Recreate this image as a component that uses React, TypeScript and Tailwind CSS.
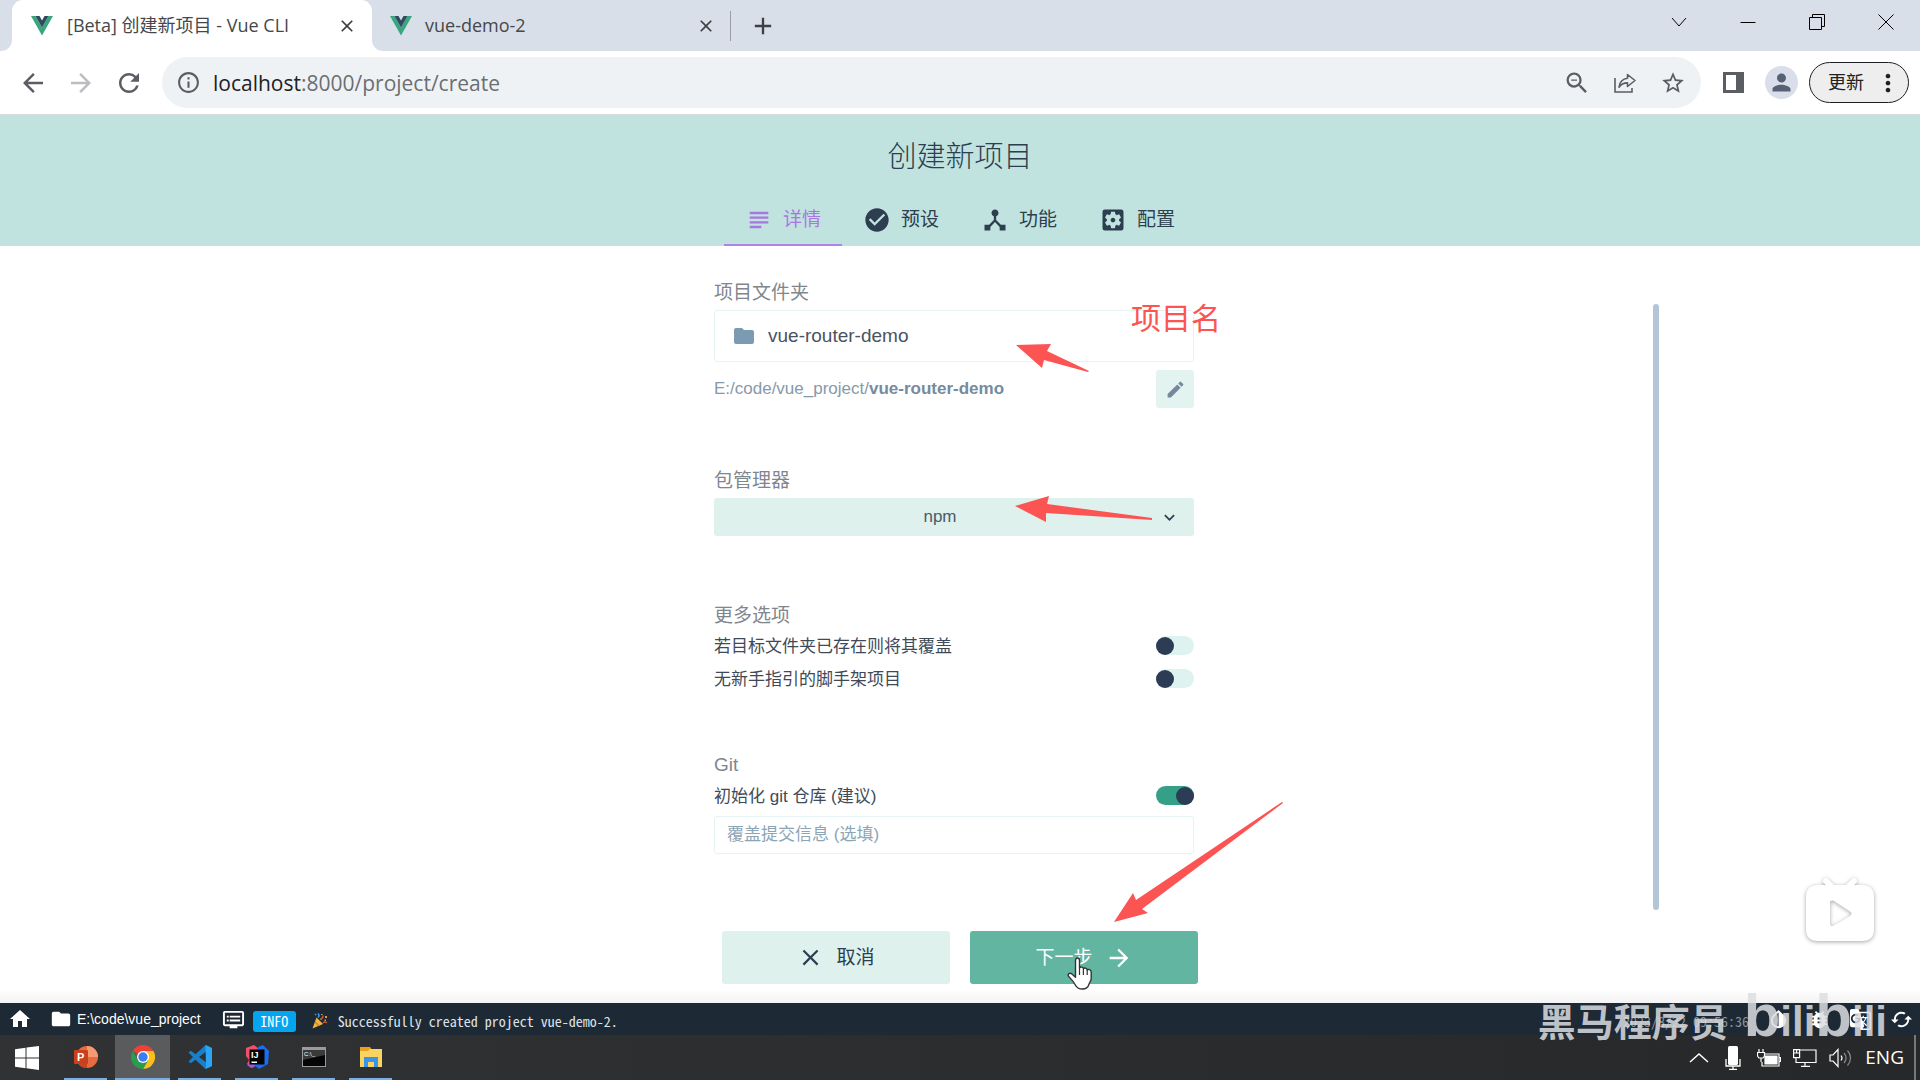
import React, { useState } from 'react';
import {
  MdAdd, MdArrowBack, MdArrowForward, MdBugReport, MdCached, MdCheckCircle, MdClose, MdDeviceHub, MdDvr, MdEdit,
  MdFolder, MdGTranslate, MdHome, MdInfoOutline, MdInvertColors, MdKeyboardArrowDown, MdMoreVert, MdPerson,
  MdRefresh, MdSettingsApplications, MdStarBorder, MdSubject, MdZoomOut,
} from 'react-icons/md';

const steps = [
  { label: '详情', Icon: MdSubject },
  { label: '预设', Icon: MdCheckCircle },
  { label: '功能', Icon: MdDeviceHub },
  { label: '配置', Icon: MdSettingsApplications },
];

const VueLogo = () => (
  <svg viewBox="0 0 22 20" className="w-[22px] h-5 shrink-0">
    <path fill="#3aa57f" d="M0 0h4.5L11 11.5 17.5 0H22L11 19.5z" />
    <path fill="#2f4a5e" d="M4.5 0h4L11 4.4 13.5 0h4L11 11.5z" />
  </svg>
);

const ShareIcon = () => (
  <svg viewBox="0 0 24 24" className="w-6 h-6" fill="none" stroke="currentColor" strokeWidth="1.6">
    <path d="M2 7v14h17v-4" />
    <path strokeLinejoin="round" d="M14.5 3.5 22 9.5l-7.500 6v-3.600c-4 0-6.500 1.200-8.500 4.300.6-4.800 3.300-8.400 8.500-9z" />
  </svg>
);

/* Barra de pestañas */
function TabStrip() {
  return (
    <div className="h-[51px] bg-[#d9dfe8] flex items-end">
      <div className="w-3 h-[51px] bg-white">
        <div className="h-full rounded-br-[11px] bg-[#d9dfe8]" />
      </div>
      <div className="w-[360px] h-[51px] bg-white rounded-t-[11px] flex items-center pl-[19px] pr-[15px]">
        <VueLogo />
        <span className="ml-[14px] flex-1 text-[18px] text-[#45474a] whitespace-nowrap">[Beta] 创建新项目 - Vue CLI</span>
        <button aria-label="关闭标签页"><MdClose size={20} className="text-[#3c4043]" /></button>
      </div>
      <div className="w-[358px] h-[51px] bg-white">
        <div className="h-full rounded-bl-[11px] bg-[#d9dfe8] flex items-center pl-[18px] pr-[14px]">
          <VueLogo />
          <span className="ml-[13px] flex-1 text-[18px] text-[#45474a]">vue-demo-2</span>
          <button aria-label="关闭标签页"><MdClose size={20} className="text-[#3c4043]" /></button>
        </div>
      </div>
      <div className="h-[51px] flex items-center">
        <span className="w-px h-[30px] bg-[#9a9da3]" />
        <button aria-label="新标签页" className="ml-[18px]"><MdAdd size={28} className="text-[#3c4043]" /></button>
      </div>
      <div className="ml-auto h-[51px] pb-2 flex items-center text-black">
        <button aria-label="搜索标签页" className="w-[69px] flex justify-center">
          <svg viewBox="0 0 16 16" className="w-4 h-4" fill="none" stroke="currentColor"><path d="m1 4 7 8 7-8" /></svg>
        </button>
        <button aria-label="最小化" className="w-[69px] flex justify-center">
          <svg viewBox="0 0 16 16" className="w-4 h-4" fill="none" stroke="currentColor"><path d="M.5 8.500h15" /></svg>
        </button>
        <button aria-label="还原" className="w-[69px] flex justify-center">
          <svg viewBox="0 0 16 16" className="w-4 h-4" fill="none" stroke="currentColor"><path d="M.5 3.500h12v12H.5zM3.500 3.500v-3h12v12h-3" /></svg>
        </button>
        <button aria-label="关闭" className="w-[69px] flex justify-center">
          <svg viewBox="0 0 16 16" className="w-4 h-4" fill="none" stroke="currentColor"><path d="m.5.5 15 15m0-15-15 15" /></svg>
        </button>
      </div>
    </div>
  );
}

function Toolbar() {
  return (
    <div className="h-16 bg-white border-b border-[#dcd9da] flex items-center pl-[18px] pr-[11px] text-[#5a5d62]">
      <button aria-label="后退"><MdArrowBack size={30} /></button>
      <button aria-label="前进" className="ml-[18px]"><MdArrowForward size={30} className="text-[#bcbdc0]" /></button>
      <button aria-label="刷新" className="ml-[18px]"><MdRefresh size={30} /></button>
      <div className="ml-[18px] flex-1 h-[51px] rounded-full bg-[#eff2f4] flex items-center pl-[14px] pr-[14px]">
        <MdInfoOutline size={25} />
        <span className="ml-3 flex-1 text-[21px] leading-[30px] text-[#6b6e72]"><span className="text-[#202124]">localhost</span>:8000/project/create</span>
        <div className="flex items-center gap-5">
          <button aria-label="缩放" className="w-7 flex justify-center"><MdZoomOut size={28} /></button>
          <button aria-label="分享" className="w-7 flex justify-center"><ShareIcon /></button>
          <button aria-label="收藏" className="w-7 flex justify-center"><MdStarBorder size={26} /></button>
        </div>
      </div>
      <button aria-label="侧边栏" className="ml-[22px]">
        <svg viewBox="0 0 21 21" className="w-[21px] h-[21px]"><path fill="currentColor" fillRule="evenodd" d="M0 0h21v21H0zM3 3v15h10V3z" /></svg>
      </button>
      <button aria-label="用户" className="ml-[21px] w-[33px] h-[33px] rounded-full bg-[#d9deea] flex items-center justify-center">
        <MdPerson size={27} className="text-[#566176]" />
      </button>
      <button className="ml-[11px] w-[100px] h-[41px] rounded-full border border-[#1f1f1f] bg-[#eeeeee] flex items-center pl-[18px] text-[18px] text-[#202124]">
        更新<MdMoreVert size={28} className="ml-[10px]" />
      </button>
    </div>
  );
}

function Toggle({ label, initial }: { label: string; initial: boolean }) {
  const [on, setOn] = useState(initial);
  return (
    <label className="h-[33px] flex items-center justify-between text-[17px] text-[#3f4a58]">
      <span className="pt-[2px]">{label}</span>
      <input
        type="checkbox"
        checked={on}
        onChange={() => setOn(!on)}
        className="appearance-none w-[38px] h-[19px] rounded-full bg-[#def2ef] checked:bg-[#34a088] flex items-center checked:justify-end before:w-[18px] before:h-[18px] before:rounded-full before:bg-[#2b3c54]"
      />
    </label>
  );
}

/* Flechas rojas sobre el formulario */
const Marks = () => (
  <div className="absolute left-0 top-0 pointer-events-none">
    <svg viewBox="0 0 600 700" className="w-[600px] h-[700px]" fill="#fc5353">
      <path d="m302 99 35-1-4 7 42 20-1 1-44-12-2 8z" />
      <path d="m301 260 34-10-2 8 105 14v2l-106-7v9z" />
      <path d="m400 676 19-29 3 7 146-98 1 1-141 106 6 4z" />
    </svg>
    <span className="absolute left-[417px] top-[55px] text-[30px] leading-9 text-[#fc5353] whitespace-nowrap">项目名</span>
  </div>
);

const Hand = () => (
  <svg viewBox="0 0 26 33" className="absolute left-[97px] top-[26px] w-[26px] h-[33px] pointer-events-none">
    <path
      fill="#fff" stroke="#333" strokeWidth="1.400" strokeLinejoin="round"
      d="M8.500 3.500c0-3.300 4-3.300 4 0V11c.8-1.500 3.700-1.200 3.900.8.9-1.300 3.600-.8 3.800 1.200 1.200-1.200 4-.5 4 2v6.500c0 2.500-1.800 4.200-2.400 6.200-.8 2.600-2.500 4.300-6.300 4.300-4 0-6-1.500-7.300-4.300-1.500-3.200-3.800-5.300-6.500-8.200-1.500-2 .8-4.300 3.200-2.500l3.600 3.200z"
    />
    <path stroke="#333" strokeWidth="1.200" d="M12.500 11v7m3.900-6v6m3.800-5v5" />
  </svg>
);

function Wizard() {
  const [folder, setFolder] = useState('vue-router-demo');
  const [message, setMessage] = useState('');

  return (
    <div className="flex-1 flex flex-col bg-white">
      <header className="bg-[#c1e3df] flex flex-col items-center text-[#2c3e50]">
        <h1 className="mt-[22px] text-[29px] leading-10 font-light">创建新项目</h1>
        <nav className="mt-[17px] flex">
          {steps.map(({ label, Icon }, i) => (
            <button
              key={label}
              className={i === 0
                ? 'w-[118px] h-[52px] pt-[2px] flex items-center justify-center gap-[10px] text-[19px] border-b-2 border-[#ab86e6] text-[#a877e2]'
                : 'w-[118px] h-[52px] pt-[2px] flex items-center justify-center gap-[10px] text-[19px] border-b-2 border-transparent'}
            >
              <Icon size={28} />
              {label}
            </button>
          ))}
        </nav>
      </header>

      <div className="flex-1 w-full max-w-[1400px] mx-auto flex">
        <div className="flex-1 flex justify-center">
          <form className="relative w-[480px] pt-8 flex flex-col gap-[58px]" onSubmit={e => e.preventDefault()}>
            <section>
              <label htmlFor="folder" className="block pt-[3px] mb-[5px] text-[19px] leading-6 text-[#7f868e]">项目文件夹</label>
              <div className="h-[52px] border border-[#e6f3f4] rounded-[3px] flex items-center pl-[17px]">
                <MdFolder size={24} className="text-[#7b9bb2]" />
                <input id="folder" value={folder} onChange={e => setFolder(e.target.value)} className="ml-3 flex-1 min-w-0 text-[19px] text-[#4a5360] outline-none" />
              </div>
              <div className="mt-2 h-[38px] flex items-center justify-between">
                <p className="text-[17px] text-[#8799aa]">E:/code/vue_project/<b className="text-[#748ba0]">{folder}</b></p>
                <button aria-label="编辑" className="w-[38px] h-[38px] rounded-[3px] bg-[#e2f3f0] flex items-center justify-center">
                  <MdEdit size={21} className="text-[#75899e]" />
                </button>
              </div>
            </section>

            <section className="pb-[9px]">
              <label htmlFor="manager" className="block pt-[3px] mb-[5px] text-[19px] leading-6 text-[#7f868e]">包管理器</label>
              <div className="relative">
                <select id="manager" className="appearance-none w-full h-[38px] pr-7 rounded-[3px] bg-[#def1ed] text-center text-[17px] text-[#4a5b6b]">
                  <option>npm</option>
                  <option>yarn</option>
                </select>
                <MdKeyboardArrowDown size={21} className="absolute right-[14px] top-[9px] text-[#2c3e50] pointer-events-none" />
              </div>
            </section>

            <section>
              <h2 className="pt-px mb-px text-[19px] leading-6 text-[#7f868e]">更多选项</h2>
              <Toggle label="若目标文件夹已存在则将其覆盖" initial={false} />
              <Toggle label="无新手指引的脚手架项目" initial={false} />
            </section>

            <section>
              <h2 className="mb-[2px] text-[19px] leading-6 text-[#7f868e]">Git</h2>
              <Toggle label="初始化 git 仓库 (建议)" initial={true} />
              <input
                aria-label="覆盖提交信息"
                placeholder="覆盖提交信息 (选填)"
                value={message}
                onChange={e => setMessage(e.target.value)}
                className="mt-1 w-full h-[38px] border border-[#e6f3f4] rounded-[3px] px-3 text-[17px] placeholder:text-[#8ba5b6] outline-none"
              />
            </section>
            <Marks />
          </form>
        </div>
        <div className="w-3 pt-[58px] pr-px flex justify-end">
          <div className="w-[6px] rounded-full bg-[#b3c6d7]" />
        </div>
      </div>

      <footer className="pt-[21px] pb-[19px] flex justify-center gap-5 bg-linear-to-t from-[#f3f3f4] to-white to-15%">
        <button className="w-[228px] h-[53px] rounded-[3px] bg-[#def1ed] flex items-center justify-center gap-3 text-[19px] text-[#2c3e50]">
          <MdClose size={27} /><span className="pt-[2px]">取消</span>
        </button>
        <button className="relative w-[228px] h-[53px] rounded-[3px] bg-[#62b5a1] flex items-center justify-center gap-3 text-[19px] text-white">
          <span className="pt-[2px]">下一步</span><MdArrowForward size={28} />
          <Hand />
        </button>
      </footer>
    </div>
  );
}

function StatusBar() {
  return (
    <div className="h-8 bg-[#1d2935] flex items-center pl-2 pr-[7px] text-white">
      <button aria-label="首页"><MdHome size={24} /></button>
      <MdFolder size={22} className="ml-[18px]" />
      <span className="ml-[5px] text-[14px]">E:\code\vue_project</span>
      <MdDvr size={23} className="ml-[21px]" />
      <span className="ml-2 mt-1 w-[43px] h-[21px] rounded-[3px] bg-[#04a4ef] flex items-center justify-center font-['Noto_Sans_Mono_CJK_SC','Liberation_Mono',monospace] text-[14px] leading-5">INFO</span>
      <svg viewBox="0 0 16 16" className="ml-4 mt-1 w-4 h-4">
        <path fill="#f2b63c" d="M4.500 4.500 11 11 .5 15.500z" />
        <path fill="#d58b2b" d="m3.500 8 4.300 4.400-1.800.8-3.300-3.400z" />
        <path fill="none" stroke="#3b9de0" strokeWidth="1.500" d="M6 4.500C7.500 3 7 1.500 6 .5M3 1l1 1" />
        <path fill="none" stroke="#c4593b" strokeWidth="1.500" d="M11 10c1.200-1.300 2.500-1.200 4-.2M8 6.500c2-.5 3-2 3-4" />
        <path fill="#d9a13c" d="M13 3h2v2h-2zM12.500 6.500H14V8h-1.500zM9 1h1.500v1H9z" />
      </svg>
      <span className="ml-[10px] mt-1 font-['Noto_Sans_Mono_CJK_SC','Liberation_Mono',monospace] text-[14px] leading-5 text-[#dfe3e6]">Successfully created project vue-demo-2.</span>
      <span className="ml-auto mt-1 font-['Noto_Sans_Mono_CJK_SC','Liberation_Mono',monospace] text-[14px] leading-5 text-[#8b949c]">2023/8/22 09:56:36</span>
      <div className="ml-[18px] flex items-center gap-[18px]">
        <button aria-label="主题"><MdInvertColors size={23} /></button>
        <button aria-label="反馈"><MdBugReport size={23} /></button>
        <button aria-label="翻译"><MdGTranslate size={23} /></button>
        <button aria-label="重载"><MdCached size={23} /></button>
      </div>
    </div>
  );
}

const apps = [
  {
    name: 'PowerPoint',
    icon: (
      <svg viewBox="0 0 24 24" className="w-6 h-6">
        <circle cx="13" cy="12" r="11" fill="#e66c40" />
        <path fill="#f79a74" d="M13 1a11 11 0 0 1 11 11H13z" />
        <path fill="#c9431f" d="M2 12h11v11A11 11 0 0 1 2 12z" />
        <rect y="5" width="14" height="14" rx="1" fill="#c8401c" />
        <text x="3" y="16" fontSize="11" fontWeight="bold" fill="#fff">P</text>
      </svg>
    ),
  },
  {
    name: 'Chrome',
    active: true,
    icon: (
      <svg viewBox="0 0 24 24" className="w-6 h-6">
        <path fill="#ea4335" d="M12 12 1.600 6a12 12 0 0 1 20.800 0z" />
        <path fill="#fbc11a" d="M12 6h10.400A12 12 0 0 1 12 24l5.200-9z" />
        <path fill="#2a9d4c" d="M1.600 6 6.800 15A6 6 0 0 0 17.200 15L12 24A12 12 0 0 1 1.600 6z" />
        <circle cx="12" cy="12" r="6" fill="#fff" />
        <circle cx="12" cy="12" r="4.700" fill="#3b7cf0" />
      </svg>
    ),
  },
  {
    name: 'VS Code',
    icon: (
      <svg viewBox="0 0 24 24" className="w-6 h-6">
        <path fill="#1a7fc9" fillRule="evenodd" d="M17.500 0 24 3v18l-6.500 3L7.500 14.700l-4.700 3.600L.5 16.500 5 12 .5 7.500l2.300-1.800 4.700 3.600zM18 6.800 11 12l7 5.200z" />
        <path fill="#2ba5f5" d="M17.500 0 24 3v18l-6.500 3 .5-3z" />
      </svg>
    ),
  },
  {
    name: 'IntelliJ IDEA',
    icon: (
      <svg viewBox="0 0 24 24" className="w-6 h-6">
        <path fill="#f0506a" d="M1 3 9 0l5 4-6 19-6-4 2-4-3-4z" />
        <path fill="#a457d8" d="m2 20 6-4 3 5-5 2z" />
        <path fill="#1c6cf0" d="m13 2 5-2 6 6-1 13-9 5-5-4z" />
        <path fill="#000" d="M4.500 4.500h15v15h-15z" />
        <path fill="#fff" d="M6.500 16.500h5.500V18H6.500z" />
        <text x="6" y="13" fontSize="9" fontWeight="bold" fill="#fff">IJ</text>
      </svg>
    ),
  },
  {
    name: '命令提示符',
    icon: (
      <svg viewBox="0 0 24 20" className="w-6 h-5">
        <path fill="#9b9b9b" d="M0 0h24v20H0z" />
        <path fill="#050505" d="M1 3h22v16H1z" />
        <path fill="#3a3a3a" d="M1 3h22v5L1 13z" />
        <text x="2" y="9" fontSize="6" fill="#fff">C:\_</text>
      </svg>
    ),
  },
  {
    name: '文件资源管理器',
    icon: (
      <svg viewBox="0 0 24 20" className="w-6 h-5">
        <path fill="#e9a01f" d="M1 0h10l2 3v4H1z" />
        <path fill="#fbd363" d="M1 4h8l2-2h12v18H1z" />
        <path fill="#3a94e8" d="M5 10h14v10h-4v-5H9v5H5z" />
      </svg>
    ),
  },
];

/* Barra de tareas */
function Taskbar() {
  return (
    <div className="h-[45px] bg-linear-to-r from-[#313233] to-[#272829] flex text-white">
      <button aria-label="开始" className="w-[57px] flex items-center pl-[15px]">
        <svg viewBox="0 0 24 24" className="w-6 h-6" fill="#fff">
          <path d="M0 3.300 10.500 1.800v9.700H0zM11.500 1.600 24 0v11.500H11.500zM0 12.500h10.500v9.700L0 20.700zM11.500 12.500H24V24l-12.500-1.700z" />
        </svg>
      </button>
      {apps.map(a => (
        <button key={a.name} aria-label={a.name} className="w-[57px] flex justify-center">
          <span
            className={a.active
              ? 'w-[55px] h-full flex items-center justify-center border-b-2 border-[#78b0e6] bg-[#5a5b5d]'
              : 'w-[43px] h-full flex items-center justify-center border-b-2 border-[#78b0e6]'}
          >
            {a.icon}
          </span>
        </button>
      ))}
      <div className="ml-auto pr-[10px] flex items-center gap-3">
        <svg viewBox="0 0 20 12" className="w-5 h-3 mr-1" fill="none" stroke="#fff" strokeWidth="1.500"><path d="m1 10 9-8 9 8" /></svg>
        <svg viewBox="0 0 16 24" className="w-4 h-6 mr-1">
          <rect x="3" width="10" height="19" rx="1.500" fill="#fff" />
          <path fill="none" stroke="#fff" strokeWidth="1.300" d="M1 13v7h14v-7M8 20v3M4 23.300h8" />
        </svg>
        <svg viewBox="0 0 24 18" className="w-6 h-[18px]" fill="none" stroke="#fff" strokeWidth="1.200">
          <path d="M7 5h15v12H5v-4M22.500 8.500h1v4h-1" />
          <path fill="#fff" d="M8 7h12v8H8z" />
          <path d="M2 0v3M6 0v3M.5 3.500h7V7L6 9H2L.5 7zM4 9v4" />
        </svg>
        <svg viewBox="0 0 24 18" className="w-6 h-[18px]" fill="none" stroke="#fff" strokeWidth="1.200">
          <path d="M7 1h16v12.500H3V9M12 14v3M8 17.300h9M.6.6h6v8h-6zM.6 4h6M3.600 1v3" />
        </svg>
        <svg viewBox="0 0 24 20" className="w-6 h-5" fill="none" stroke="#fff" strokeWidth="1.200">
          <path d="M1 7h3l5-5.500v17L4 13H1z" />
          <path d="M12 7.500c1.200 1.500 1.200 3.500 0 5" />
          <path stroke="#888" d="M15 5c2.500 3 2.500 7 0 10M18.500 2.500c4 4.500 4 10.500 0 15" />
        </svg>
        <span className="text-[19px] font-['Open_Sans',sans-serif]">ENG</span>
      </div>
      <span className="w-[6px] border-l-2 border-[#77787a]" />
    </div>
  );
}

/* Marca de agua del canal */
const Watermark = () => (
  <div className="absolute right-[33px] bottom-[24px] flex items-baseline gap-4 pointer-events-none text-[#dcdee0]/85">
    <span className="pb-1 text-[38px] leading-[46px] font-bold whitespace-nowrap">黑马程序员</span>
    <span className="text-[42px] leading-[68px] font-bold"><span className="text-[60px]">b</span>ili<span className="text-[60px]">b</span>ili</span>
  </div>
);

const TvBadge = () => (
  <svg viewBox="0 0 80 80" className="absolute right-10 bottom-[131px] w-20 h-20 pointer-events-none drop-shadow-[0_1px_2px_rgba(0,0,0,0.35)]">
    <path fill="none" stroke="#fff" strokeWidth="6" strokeLinecap="round" d="m26 12 6 6m22-6-6 6" />
    <path
      fill="#fff" fillRule="evenodd"
      d="M18 16h44c8 0 12 4 12 12v32c0 8-4 12-12 12H18C10 72 6 68 6 60V28c0-8 4-12 12-12zm12 18v20c0 3 1.500 3.500 4 2.500L50 47c2-1.500 2-3.500 0-4.500L34 32c-2.500-1-4 0-4 2z"
    />
  </svg>
);

export default function App() {
  return (
    <div className="relative min-h-screen flex flex-col overflow-hidden bg-white font-['Liberation_Sans','Noto_Sans_CJK_SC',sans-serif]">
      <div className="font-['Open_Sans','Noto_Sans_CJK_SC',sans-serif]">
        <TabStrip />
        <Toolbar />
      </div>
      <Wizard />
      <StatusBar />
      <Taskbar />
      <TvBadge />
      <Watermark />
    </div>
  );
}
